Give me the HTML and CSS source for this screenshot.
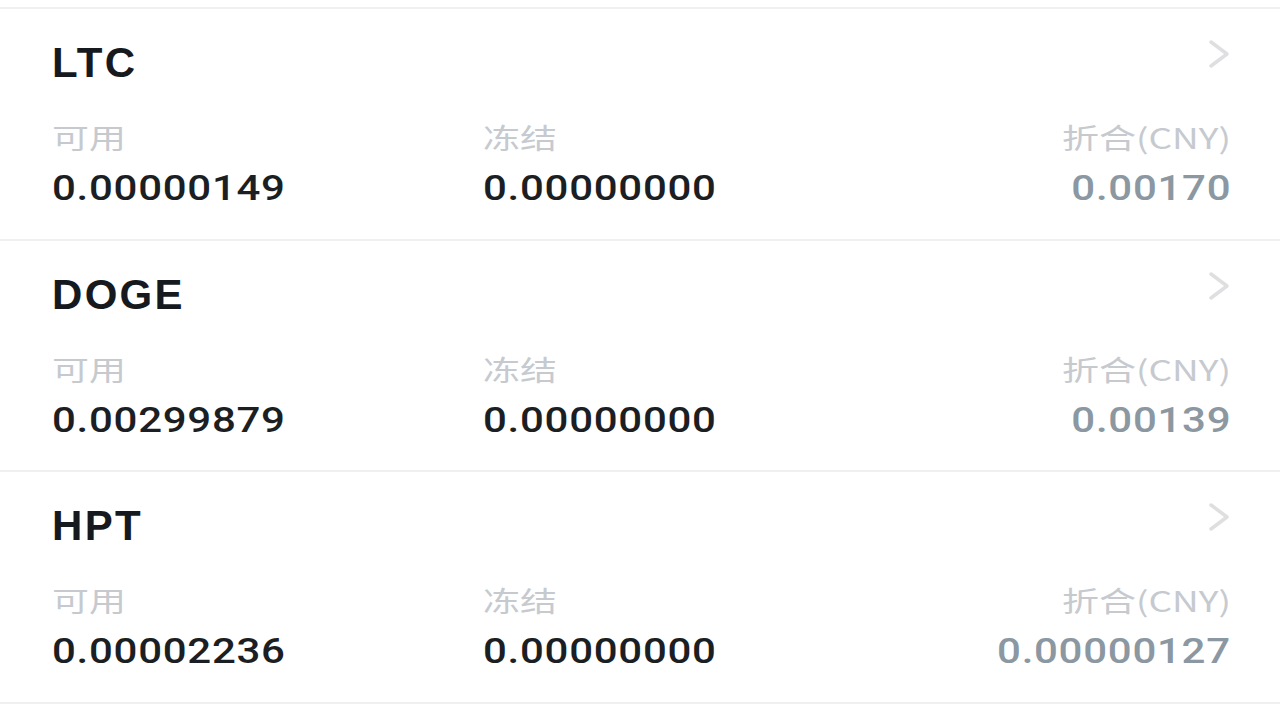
FILE: index.html
```html
<!DOCTYPE html>
<html lang="zh-CN">
<head>
  <meta charset="utf-8">
  <title>资产</title>
  <link rel="stylesheet" href="styles.css">
</head>

<body>
  <main>
    <ul class="assets">
      <li class="asset">
        <div class="head">
          <span class="coin">LTC</span>
          <svg class="chevron" width="22" height="30" viewBox="0 0 22 30"><polyline points="3,3 19,15 3,27" /></svg>
        </div>
        <div class="cols">
          <div class="col">
            <div class="label"><span>可用</span></div>
            <div class="value"><span>0.00000149</span></div>
          </div>
          <div class="col">
            <div class="label"><span>冻结</span></div>
            <div class="value"><span>0.00000000</span></div>
          </div>
          <div class="col cny">
            <div class="label"><span>折合(CNY)</span></div>
            <div class="value"><span>0.00170</span></div>
          </div>
        </div>
      </li>

      <li class="asset">
        <div class="head">
          <span class="coin">DOGE</span>
          <svg class="chevron" width="22" height="30" viewBox="0 0 22 30"><polyline points="3,3 19,15 3,27" /></svg>
        </div>
        <div class="cols">
          <div class="col">
            <div class="label"><span>可用</span></div>
            <div class="value"><span>0.00299879</span></div>
          </div>
          <div class="col">
            <div class="label"><span>冻结</span></div>
            <div class="value"><span>0.00000000</span></div>
          </div>
          <div class="col cny">
            <div class="label"><span>折合(CNY)</span></div>
            <div class="value"><span>0.00139</span></div>
          </div>
        </div>
      </li>

      <li class="asset">
        <div class="head">
          <span class="coin">HPT</span>
          <svg class="chevron" width="22" height="30" viewBox="0 0 22 30"><polyline points="3,3 19,15 3,27" /></svg>
        </div>
        <div class="cols">
          <div class="col">
            <div class="label"><span>可用</span></div>
            <div class="value"><span>0.00002236</span></div>
          </div>
          <div class="col">
            <div class="label"><span>冻结</span></div>
            <div class="value"><span>0.00000000</span></div>
          </div>
          <div class="col cny">
            <div class="label"><span>折合(CNY)</span></div>
            <div class="value"><span>0.00000127</span></div>
          </div>
        </div>
      </li>
    </ul>
  </main>
</body>
</html>
```

FILE: styles.css
```css
*,
*::before,
*::after {
  box-sizing: border-box;
}

html {
  font-family: "Liberation Sans", "Noto Sans CJK SC", sans-serif;
}
body {
  margin: 0;
  background: #fff;
}

.assets {
  margin: 7px 0 0;
  padding: 0;
  list-style: none;
  border-top: 2px solid #f0f0f0;
}

.asset {
  padding: 33px 51px 32.7px 52px;
  border-bottom: 2px solid #f0f0f0;
}

.head {
  display: flex;
  justify-content: space-between;
  align-items: flex-start;
}

.coin {
  font-size: 42px;
  line-height: 42px;
  font-weight: bold;
  letter-spacing: 2.3px;
  color: #16191d;
}

.chevron {
  margin-top: -3px;
  margin-right: -1px;
}
.chevron polyline {
  fill: none;
  stroke: #dedfe1;
  stroke-width: 3.5;
  stroke-linecap: round;
  stroke-linejoin: round;
}

.cols {
  display: grid;
  grid-template-columns: 431px 431px 1fr;
  margin-top: 39px;
}

/* the screenshot is stretched sideways, so the text is too */
.label span,
.value span {
  display: inline-block;
  transform-origin: left center;
}

.label {
  font-family: "Noto Sans CJK SC", sans-serif;
  font-size: 28px;
  line-height: 28px;
  color: #c6cacf;
}
.label span {
  transform: scaleX(1.32);
}

.value {
  margin-top: 21px;
  font-family: Roboto, sans-serif;
  font-weight: 500;
  font-size: 35px;
  line-height: 34px;
  letter-spacing: 0.6px;
  color: #1b1e22;
}
.value span {
  transform: scaleX(1.2);
}

.cny {
  text-align: right;
}
.cny span {
  margin-right: -2px;
  transform-origin: right center;
}
.cny .value {
  color: #8b98a2;
}
```
